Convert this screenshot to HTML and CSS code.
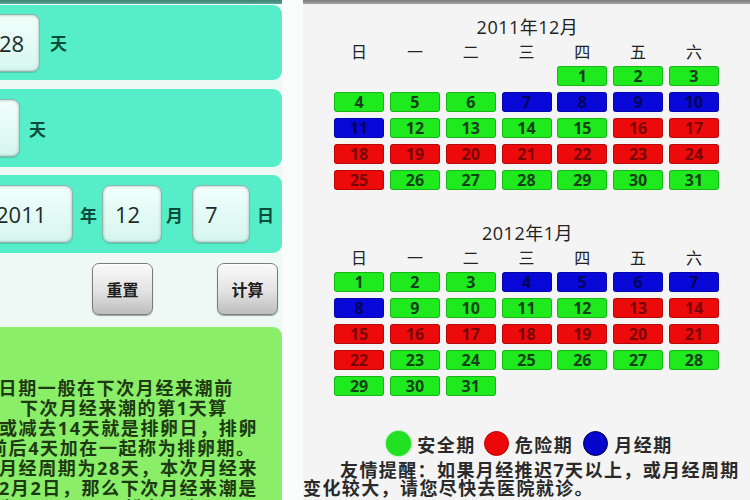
FILE: index.html
```html
<!DOCTYPE html>
<html lang="zh-CN">
<head>
<meta charset="utf-8">
<title>安全期计算</title>
<link rel="stylesheet" href="styles.css">
</head>
<body>
<div class="page">
  <div class="left">
    <div class="topbar-left"></div>
    <div class="panel p1">
      <div class="input w54">28</div>
      <span class="unit u10">天</span>
    </div>
    <div class="panel p2">
      <div class="input w54 shift"></div>
      <span class="unit u9">天</span>
    </div>
    <div class="panel p3">
      <div class="input w87 tight">2011</div>
      <span class="unit u7">年</span>
      <div class="input w60 m5">12</div>
      <span class="unit u4">月</span>
      <div class="input w58 m9">7</div>
      <span class="unit u7">日</span>
    </div>
    <div class="buttons">
      <div class="btn">重置</div>
      <div class="btn">计算</div>
    </div>
    <div class="note">
      <div class="line l1">卵日期一般在下次月经来潮前</div>
      <div class="line l2">下次月经来潮的第1天算</div>
      <div class="line l3">或减去14天就是排卵日，排卵</div>
      <div class="line l4">前后4天加在一起称为排卵期。</div>
      <div class="line l5">月经周期为28天，本次月经来</div>
      <div class="line l6">12月2日，那么下次月经来潮是</div>
      <div class="line l7">为12月30日，排卵日为16日</div>
    </div>
  </div>

  <div class="right">
    <div class="topbar-right"></div>
    <div class="month first">
      <div class="title">2011年12月</div>
      <div class="grid week">
        <span>日</span><span>一</span><span>二</span><span>三</span><span>四</span><span>五</span><span>六</span>
      </div>
      <div class="grid days">
        <span class="empty"></span><span class="empty"></span><span class="empty"></span><span class="empty"></span>
        <span class="g">1</span><span class="g">2</span><span class="g">3</span>
        <span class="g">4</span><span class="g">5</span><span class="g">6</span><span class="b">7</span><span class="b">8</span><span class="b">9</span><span class="b">10</span>
        <span class="b">11</span><span class="g">12</span><span class="g">13</span><span class="g">14</span><span class="g">15</span><span class="r">16</span><span class="r">17</span>
        <span class="r">18</span><span class="r">19</span><span class="r">20</span><span class="r">21</span><span class="r">22</span><span class="r">23</span><span class="r">24</span>
        <span class="r">25</span><span class="g">26</span><span class="g">27</span><span class="g">28</span><span class="g">29</span><span class="g">30</span><span class="g">31</span>
      </div>
    </div>
    <div class="month second">
      <div class="title">2012年1月</div>
      <div class="grid week">
        <span>日</span><span>一</span><span>二</span><span>三</span><span>四</span><span>五</span><span>六</span>
      </div>
      <div class="grid days">
        <span class="g">1</span><span class="g">2</span><span class="g">3</span><span class="b">4</span><span class="b">5</span><span class="b">6</span><span class="b">7</span>
        <span class="b">8</span><span class="g">9</span><span class="g">10</span><span class="g">11</span><span class="g">12</span><span class="r">13</span><span class="r">14</span>
        <span class="r">15</span><span class="r">16</span><span class="r">17</span><span class="r">18</span><span class="r">19</span><span class="r">20</span><span class="r">21</span>
        <span class="r">22</span><span class="g">23</span><span class="g">24</span><span class="g">25</span><span class="g">26</span><span class="g">27</span><span class="g">28</span>
        <span class="g">29</span><span class="g">30</span><span class="g">31</span>
      </div>
    </div>
    <div class="legend">
      <span class="dot dg"></span><span class="ltext">安全期</span>
      <span class="dot dr"></span><span class="ltext">危险期</span>
      <span class="dot db"></span><span class="ltext">月经期</span>
    </div>
    <div class="tip">
      <div class="tip1">友情提醒：如果月经推迟7天以上，或月经周期</div>
      <div class="tip2">变化较大，请您尽快去医院就诊。</div>
    </div>
  </div>
</div>
</body>
</html>
```

FILE: styles.css
```css
* { box-sizing: border-box; }
html, body {
  margin: 0;
  padding: 0;
  width: 750px;
  height: 500px;
  overflow: hidden;
  background: #fafbfb;
  font-family: "Open Sans", "Noto Sans CJK SC", sans-serif;
}
.page {
  display: flex;
  width: 750px;
  height: 500px;
}
.left {
  width: 312px;
  margin-left: -30px;
  height: 500px;
  background: #eef9f6;
  display: flex;
  flex-direction: column;
  flex-shrink: 0;
}
.topbar-left {
  height: 4px;
  background: linear-gradient(#3f7f72, #5aa895);
  flex-shrink: 0;
}
.panel {
  background: #55eec8;
  border-radius: 9px;
  display: flex;
  align-items: center;
  padding-left: 16px;
  flex-shrink: 0;
}
.p1 { margin-top: 1px; height: 75px; }
.p2 { margin-top: 9px; height: 78px; }
.p3 { margin-top: 8px; height: 78px; }
.input {
  height: 58px;
  border-radius: 8px;
  background: linear-gradient(#f2fffb, #d6f6ee);
  border: 1px solid #8fb3a9;
  box-shadow: inset 0 0 3px rgba(60, 100, 90, 0.45), 0 1px 1px rgba(0,0,0,0.15);
  font-size: 22px;
  color: #1f2a28;
  line-height: 56px;
  padding-left: 12px;
  flex-shrink: 0;
}
.tight { padding-left: 9px; }
.w54 { width: 54px; }
.w87 { width: 87px; }
.w60 { width: 60px; }
.w58 { width: 58px; }
.shift { margin-left: -20px; }
.m5 { margin-left: 5px; }
.m9 { margin-left: 9px; }
.unit {
  font-size: 17px;
  font-weight: bold;
  color: #0b4b39;
  width: 17px;
  flex-shrink: 0;
}
.u10 { margin-left: 10px; }
.u9 { margin-left: 9px; }
.u7 { margin-left: 7px; }
.u4 { margin-left: 4px; }
.buttons {
  margin-top: 10px;
  height: 52px;
  display: flex;
  justify-content: flex-end;
  gap: 64px;
  padding-right: 4px;
  flex-shrink: 0;
}
.btn {
  width: 61px;
  height: 52px;
  border-radius: 7px;
  border: 1px solid #7c7c7c;
  background: linear-gradient(#fafafa, #e2e2e2 55%, #bdbdbd);
  box-shadow: 0 1px 1px rgba(0,0,0,0.35), inset 0 1px 0 #fff;
  font-size: 16px;
  font-weight: bold;
  color: #1e1e1e;
  display: flex;
  align-items: center;
  justify-content: center;
}
.note {
  margin-top: 12px;
  flex: 1;
  background: #8aee68;
  border-radius: 9px 9px 0 0;
  padding-top: 51px;
  overflow: hidden;
}
.line {
  white-space: nowrap;
  font-size: 18px;
  line-height: 20px;
  font-weight: bold;
  letter-spacing: 1.6px;
  color: #1d3a12;
}
.l1 { margin-left: 9px; }
.l2 { margin-left: 50px; }
.l3 { margin-left: 29px; }
.l4 { margin-left: 19px; }
.l5 { margin-left: 29px; }
.l6 { margin-left: 17px; }
.l7 { margin-left: 29px; }

.right {
  margin-left: 21px;
  width: 447px;
  height: 500px;
  background: #f4f4f4;
  flex-shrink: 0;
  display: flex;
  flex-direction: column;
}
.topbar-right {
  height: 4px;
  background: linear-gradient(#7a7a7a, #a5a5a5);
}
.month.first { margin-top: 13px; }
.month.second { margin-top: 33px; }
.title {
  text-align: center;
  font-size: 18px;
  line-height: 20px;
  color: #222;
  letter-spacing: 0.5px;
  padding-left: 2px;
}
.grid {
  display: grid;
  grid-template-columns: repeat(7, 50px);
  column-gap: 5.8px;
  justify-content: center;
}
.week {
  margin-top: 5px;
  font-size: 16px;
  line-height: 20px;
  color: #222;
  text-align: center;
}
.days {
  margin-top: 4px;
  row-gap: 6px;
}
.days span {
  height: 20px;
  border-radius: 3px;
  font-size: 16px;
  font-weight: bold;
  line-height: 18px;
  text-align: center;
  border: 1px solid rgba(0, 0, 0, 0.22);
}
.days .empty { border: none; }
.days .g { background: #1eea1e; color: #13401a; }
.days .r { background: #ec0a0a; color: #7a0505; }
.days .b { background: #0808d8; color: #05055a; }
.legend {
  margin-top: 35px;
  height: 25px;
  display: flex;
  align-items: center;
  justify-content: center;
  padding-left: 6px;
}
.dot {
  width: 25px;
  height: 25px;
  border-radius: 50%;
  flex-shrink: 0;
}
.dg { background: #22e022; box-shadow: 0 0 2px #22e022; }
.dr { background: #ec0808; border: 1px solid #b00; margin-left: 8px; }
.db { background: #0505cc; border: 1px solid #004; margin-left: 10px; }
.ltext {
  margin-left: 6px;
  font-size: 18px;
  font-weight: bold;
  letter-spacing: 1.5px;
  color: #2a2a2a;
}
.tip {
  margin-top: 5px;
  font-size: 18px;
  line-height: 18px;
  font-weight: bold;
  letter-spacing: 1.4px;
  color: #2a2a2a;
  white-space: nowrap;
}
.tip1 { padding-left: 37px; }
```
